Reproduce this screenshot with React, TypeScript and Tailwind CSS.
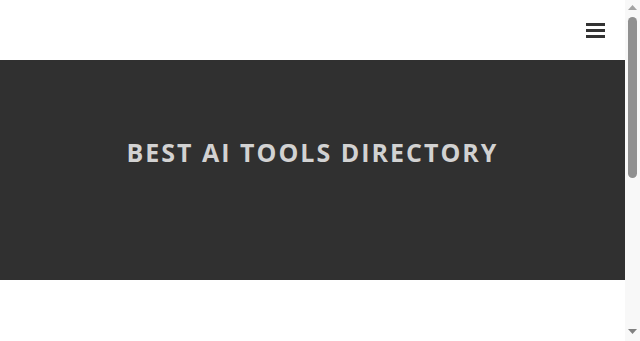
function FakeScrollbar() {
  // the reference was shot with a classic scrollbar; headless one is overlay, so draw it
  return (
    <div className="fixed top-0 right-0 flex h-[341px] w-[15px] flex-col items-center bg-[#f8f8f8]">
      <svg width="9" height="5" viewBox="0 0 9 5" className="mt-[5px]">
        <path d="M4.5 0 L9 5 L0 5 Z" fill="#a3a3a3" />
      </svg>
      <div className="mt-[7px] h-[161px] w-[9px] rounded-[5px] bg-[#909090]" />
      <div className="flex-1" />
      <svg width="9" height="5" viewBox="0 0 9 5" className="mb-[7px]">
        <path d="M0 0 L9 0 L4.5 5 Z" fill="#808080" />
      </svg>
    </div>
  )
}

export default function App() {
  return (
    <div className="min-h-[672px] w-[625px] bg-white" style={{ fontFamily: '"Open Sans", sans-serif' }}>
      <header className="flex h-[60px] items-center justify-end bg-white pr-[20px]">
        <button aria-label="Menu" className="flex w-[19px] flex-col gap-[3px]">
          <span className="block h-[3px] w-full bg-[#333333]" />
          <span className="block h-[3px] w-full bg-[#333333]" />
          <span className="block h-[3px] w-full bg-[#333333]" />
        </button>
      </header>
      <section className="flex h-[220px] items-center justify-center bg-[#303030] pb-[34px]">
        <h1 className="text-[25px] font-bold uppercase tracking-[2px] text-[#d2d2d2]">Best AI Tools Directory</h1>
      </section>
      <main className="h-[392px]" />
      <FakeScrollbar />
    </div>
  )
}
